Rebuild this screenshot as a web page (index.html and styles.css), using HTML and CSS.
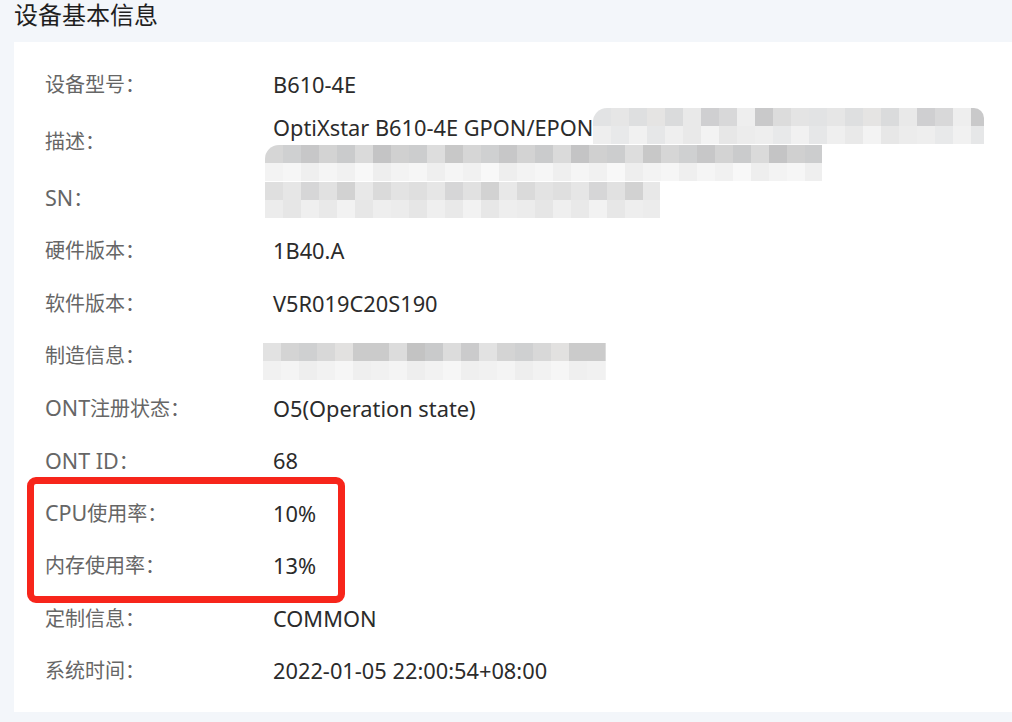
FILE: index.html
```html
<!DOCTYPE html>
<html lang="zh-CN">
<head>
<meta charset="utf-8">
<title>设备基本信息</title>
<link rel="stylesheet" href="styles.css">
</head>
<body>
<div class="page">
  <h1 class="title">设备基本信息</h1>
  <div class="card">
    <div class="row">
      <div class="label">设备型号：</div>
      <div class="value">B610-4E</div>
    </div>
    <div class="row row-desc">
      <div class="label">描述：</div>
      <div class="value desc">
        <div class="line">OptiXstar B610-4E GPON/EPON</div>
        <div class="line"></div>
        <div class="mosaic mz-a"><div class="mr mr-a1"></div><div class="mr mr-a2"></div></div>
        <div class="mosaic mz-b"><div class="mr mr-b1"></div><div class="mr mr-b2"></div></div>
      </div>
    </div>
    <div class="row">
      <div class="label"><span class="lat">SN</span>：</div>
      <div class="value">
        <div class="mosaic-flow mz-sn"><div class="mr mr-s1"></div><div class="mr mr-s2"></div></div>
      </div>
    </div>
    <div class="row">
      <div class="label">硬件版本：</div>
      <div class="value">1B40.A</div>
    </div>
    <div class="row">
      <div class="label">软件版本：</div>
      <div class="value">V5R019C20S190</div>
    </div>
    <div class="row">
      <div class="label">制造信息：</div>
      <div class="value">
        <div class="mosaic-flow mz-m"><div class="mr mr-m1"></div><div class="mr mr-m2"></div></div>
      </div>
    </div>
    <div class="row">
      <div class="label"><span class="lat">ONT</span>注册状态：</div>
      <div class="value">O5(Operation state)</div>
    </div>
    <div class="row">
      <div class="label"><span class="lat">ONT ID</span>：</div>
      <div class="value">68</div>
    </div>
    <div class="row">
      <div class="label"><span class="lat">CPU</span>使用率：</div>
      <div class="value">10%</div>
    </div>
    <div class="row">
      <div class="label">内存使用率：</div>
      <div class="value">13%</div>
    </div>
    <div class="row">
      <div class="label">定制信息：</div>
      <div class="value">COMMON</div>
    </div>
    <div class="row">
      <div class="label">系统时间：</div>
      <div class="value">2022-01-05 22:00:54+08:00</div>
    </div>
    <div class="highlight"></div>
  </div>
</div>
</body>
</html>
```

FILE: styles.css
```css
* { box-sizing: border-box; }
html, body {
  margin: 0;
  padding: 0;
  background: #f3f6fa;
  font-family: "Noto Sans", "Noto Sans CJK SC", sans-serif;
  overflow: hidden;
}
.page {
  width: 1012px;
  height: 722px;
}
.title {
  margin: 0;
  height: 42px;
  padding-left: 14px;
  font-size: 24px;
  font-weight: 400;
  line-height: 30px;
  color: #1f1f1f;
}
.card {
  position: relative;
  margin-left: 14px;
  height: 670px;
  background: #ffffff;
  padding: 17px 0 14px 31px;
}
.row {
  display: flex;
  align-items: center;
  min-height: 52.5px;
  font-size: 20px;
  line-height: 28px;
}
.label {
  width: 228px;
  flex: none;
  color: #666666;
}
.lat {
  font-size: 21.5px;
}
.value {
  color: #2b2b2b;
  flex: 1;
  font-size: 21.8px;
}
.row-desc { min-height: 61px; }
.desc {
  position: relative;
  line-height: 29px;
  padding: 1.5px 0;
}
.line { height: 29px; }
.mosaic {
  position: absolute;
  display: flex;
  flex-direction: column;
}
.mosaic-flow {
  display: flex;
  flex-direction: column;
  margin-left: -8px;
}
.mr { height: 18px; }
.mz-a { left: 320px; top: -4px; width: 391px; }
.mz-a .mr-a1 { border-radius: 14px 10px 0 0; }
.mz-b { left: -8px; top: 33px; width: 557px; }
.mz-b .mr-b1 { border-radius: 14px 0 0 0; }
.mz-sn { width: 395px; margin-top: 2px; }
.mz-m { width: 343px; margin-left: -10px; position: relative; top: 5px; }
.mz-m .mr { height: 18.5px; }

.mr-a1 {
  background: repeating-linear-gradient(90deg,
    #e2e3e4 0 18px, #e6e6e6 18px 36px, #dedfe0 36px 54px, #e5e4e3 54px 72px,
    #dadbdc 72px 90px, #e9e9e9 90px 108px, #cfcfd1 108px 126px, #d8d8d9 126px 144px,
    #eeeeee 144px 162px, #c9c9ca 162px 180px, #dcdcdc 180px 198px, #e4e4e4 198px 216px);
}
.mr-a2 {
  background: repeating-linear-gradient(90deg,
    #eeeeee 0 18px, #e8e9ea 18px 36px, #f1f1f1 36px 54px, #e6e7e8 54px 72px,
    #efefef 72px 90px, #e9e9e9 90px 108px, #f3f3f3 108px 126px, #e7e7e7 126px 144px,
    #ececec 144px 162px);
}
.mr-b1 {
  background: repeating-linear-gradient(90deg,
    #d6d6d6 0 18px, #cfd0d1 18px 36px, #c7c7c8 36px 54px, #d3d3d3 54px 72px,
    #cacbcc 72px 90px, #dadada 90px 108px, #c4c4c5 108px 126px, #d0d0d0 126px 144px,
    #cccdce 144px 162px, #dddddd 162px 180px, #c8c8c8 180px 198px);
}
.mr-b2 {
  background: repeating-linear-gradient(90deg,
    #f3f3f3 0 18px, #f6f6f6 18px 36px, #efefef 36px 54px, #f5f5f5 54px 72px,
    #f1f1f1 72px 90px, #f8f8f8 90px 108px, #eeeeee 108px 126px);
}
.mr-s1 {
  background: repeating-linear-gradient(90deg,
    #dfdfdf 0 18px, #e6e6e6 18px 36px, #d6d6d7 36px 54px, #e1e1e1 54px 72px,
    #d2d2d2 72px 90px, #e8e8e8 90px 108px, #dadada 108px 126px, #e3e3e3 126px 144px);
}
.mr-s2 {
  background: repeating-linear-gradient(90deg,
    #ececec 0 18px, #e6e6e6 18px 36px, #efefef 36px 54px, #e9e9e9 54px 72px,
    #f2f2f2 72px 90px, #e7e7e7 90px 108px, #eeeeee 108px 126px);
}
.mr-m1 {
  background: repeating-linear-gradient(90deg,
    #e2e2e2 0 18px, #d4d4d4 18px 36px, #cfd0d1 36px 54px, #d8d8d8 54px 72px,
    #e2e1e0 72px 90px, #cbcbcb 90px 126px, #dcdcdc 126px 144px, #c3c3c3 144px 162px,
    #c9cacb 162px 180px, #dcdcdc 180px 198px, #cbcbcc 198px 216px);
}
.mr-m2 {
  background: repeating-linear-gradient(90deg,
    #f1f1f1 0 18px, #f4f4f4 18px 36px, #eeeeee 36px 54px, #f2f2f2 54px 72px,
    #f6f6f6 72px 90px, #efefef 90px 108px);
}
.highlight {
  position: absolute;
  left: 13px;
  top: 435px;
  width: 318px;
  height: 126px;
  border: 7px solid #f7251b;
  border-radius: 9px;
  pointer-events: none;
}
```
